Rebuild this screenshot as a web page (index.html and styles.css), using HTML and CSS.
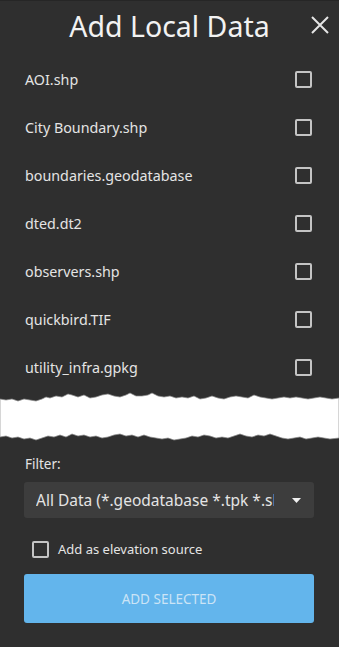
FILE: index.html
```html
<!DOCTYPE html>
<html lang="en">
<head>
    <meta charset="UTF-8">
    <title>Add Local Data</title>
    <link rel="stylesheet" href="styles.css">
</head>
<body>
    <div class="panel">
        <header class="panel-header">
            <h1 class="title">Add Local Data</h1>
            <button class="close" aria-label="Close">
                <svg width="18" height="18" viewBox="0 0 18 18">
                    <path d="M1 1 L17 17 M17 1 L1 17" stroke="#e6e6e6" stroke-width="2" fill="none"/>
                </svg>
            </button>
        </header>

        <ul class="file-list">
            <li class="file-row"><span>AOI.shp</span><span class="check"></span></li>
            <li class="file-row"><span>City Boundary.shp</span><span class="check"></span></li>
            <li class="file-row"><span>boundaries.geodatabase</span><span class="check"></span></li>
            <li class="file-row"><span>dted.dt2</span><span class="check"></span></li>
            <li class="file-row"><span>observers.shp</span><span class="check"></span></li>
            <li class="file-row"><span>quickbird.TIF</span><span class="check"></span></li>
            <li class="file-row"><span>utility_infra.gpkg</span><span class="check"></span></li>
        </ul>

        <!-- torn edge between list and filter -->
        <svg class="tear" viewBox="0 0 339 54" preserveAspectRatio="none">
            <path fill="#ffffff" stroke="#8a8a8a" stroke-width="0.7"
                d="M0 8 L6 9 L12 8 L18 10 L24 8 L30 9 L36 10 L42 8 L46 6 L50 7 L56 5 L62 6 L68 3 L72 4 L78 6 L84 4 L90 7 L96 6 L102 4 L108 3 L114 5 L120 6 L126 4 L130 2 L136 5 L142 5 L148 4 L152 2 L158 5 L164 6 L170 5 L176 7 L182 6 L188 7 L194 5 L200 8 L206 7 L212 5 L218 7 L224 8 L230 6 L236 5 L242 6 L248 7 L254 4 L260 6 L266 7 L272 8 L278 7 L284 6 L290 7 L296 6 L302 7 L308 8 L314 7 L320 6 L326 7 L332 8 L339 7
                L339 47 L330 48 L324 47 L318 46 L312 47 L306 48 L300 46 L294 47 L288 48 L282 47 L276 45 L270 43 L264 45 L258 44 L252 46 L246 45 L240 43 L234 45 L228 47 L222 46 L216 47 L210 45 L204 44 L198 46 L192 45 L186 47 L180 48 L174 49 L168 47 L162 48 L156 47 L150 46 L144 44 L138 46 L132 44 L126 45 L120 43 L114 44 L108 46 L102 47 L96 45 L90 46 L84 44 L78 45 L72 43 L66 46 L60 44 L54 46 L48 45 L42 47 L36 49 L30 47 L24 48 L18 46 L12 47 L6 45 L0 46 Z"/>
        </svg>

        <div class="footer">
            <label class="field-label">Filter:</label>
            <div class="select">
                <span class="select-text">All Data (*.geodatabase *.tpk *.shp *.gpkg *.tif *.dt2)</span>
                <svg class="caret" width="9" height="5" viewBox="0 0 9 5">
                    <path d="M0 0 L9 0 L4.5 5 Z" fill="#f0f0f0"/>
                </svg>
            </div>
            <div class="option">
                <span class="check"></span>
                <span>Add as elevation source</span>
            </div>
            <button class="add-btn">ADD SELECTED</button>
        </div>
    </div>
</body>
</html>
```

FILE: styles.css
```css
:root {
    --bg-color: #2f2f2f;
    --field-color: #3d3d3d;
    --text-color: #e4e4e4;
    --check-color: #c4c4c4;
    --accent-color: #63b5ec;
}

body {
    margin: 0;
    background-color: var(--bg-color);
    color: var(--text-color);
    font-family: "Noto Sans", "Open Sans", sans-serif;
}

.panel {
    width: 339px;
    height: 647px;
    border-top: 1px solid #262626;
    box-sizing: border-box;
}

.panel-header {
    display: grid;
    grid-template-columns: 1fr auto 1fr;
    align-items: center;
    height: 54px;
}

.title {
    grid-column: 2;
    margin: 0;
    font-size: 28.5px;
    font-weight: 400;
    color: #f2f2f2;
    padding-bottom: 4px;
}

.close {
    grid-column: 3;
    justify-self: end;
    margin-right: 10px;
    margin-bottom: 6px;
    background: none;
    border: none;
    padding: 0;
    width: 18px;
    height: 18px;
    cursor: pointer;
}

.file-list {
    list-style: none;
    margin: 0;
    padding: 0;
}

.file-row {
    display: flex;
    justify-content: space-between;
    align-items: center;
    height: 48px;
    padding: 0 27px 0 25px;
    font-size: 14.3px;
}

.check {
    display: inline-block;
    width: 13px;
    height: 13px;
    border: 2px solid var(--check-color);
    border-radius: 2px;
}

.tear {
    display: block;
    width: 339px;
    height: 54px;
}

.footer {
    padding: 0 25px 0 24px;
}

.field-label {
    display: block;
    margin-top: 9px;
    font-size: 13.5px;
    line-height: 20px;
    padding-left: 1px;
}

.select {
    display: flex;
    align-items: center;
    justify-content: space-between;
    height: 36px;
    margin-top: 8px;
    padding: 0 13px 0 12px;
    background-color: var(--field-color);
    border-radius: 3px;
}

.select-text {
    width: 238px;
    overflow: hidden;
    white-space: nowrap;
    font-size: 15.5px;
}

.option {
    display: flex;
    align-items: center;
    gap: 9px;
    height: 56px;
    box-sizing: border-box;
    padding: 6px 0 0 8px;
    font-size: 13px;
}

.add-btn {
    display: block;
    width: 100%;
    height: 49px;
    border: none;
    border-radius: 3px;
    background-color: var(--accent-color);
    color: #cbe4f6;
    font-family: inherit;
    font-size: 13.5px;
}
```
